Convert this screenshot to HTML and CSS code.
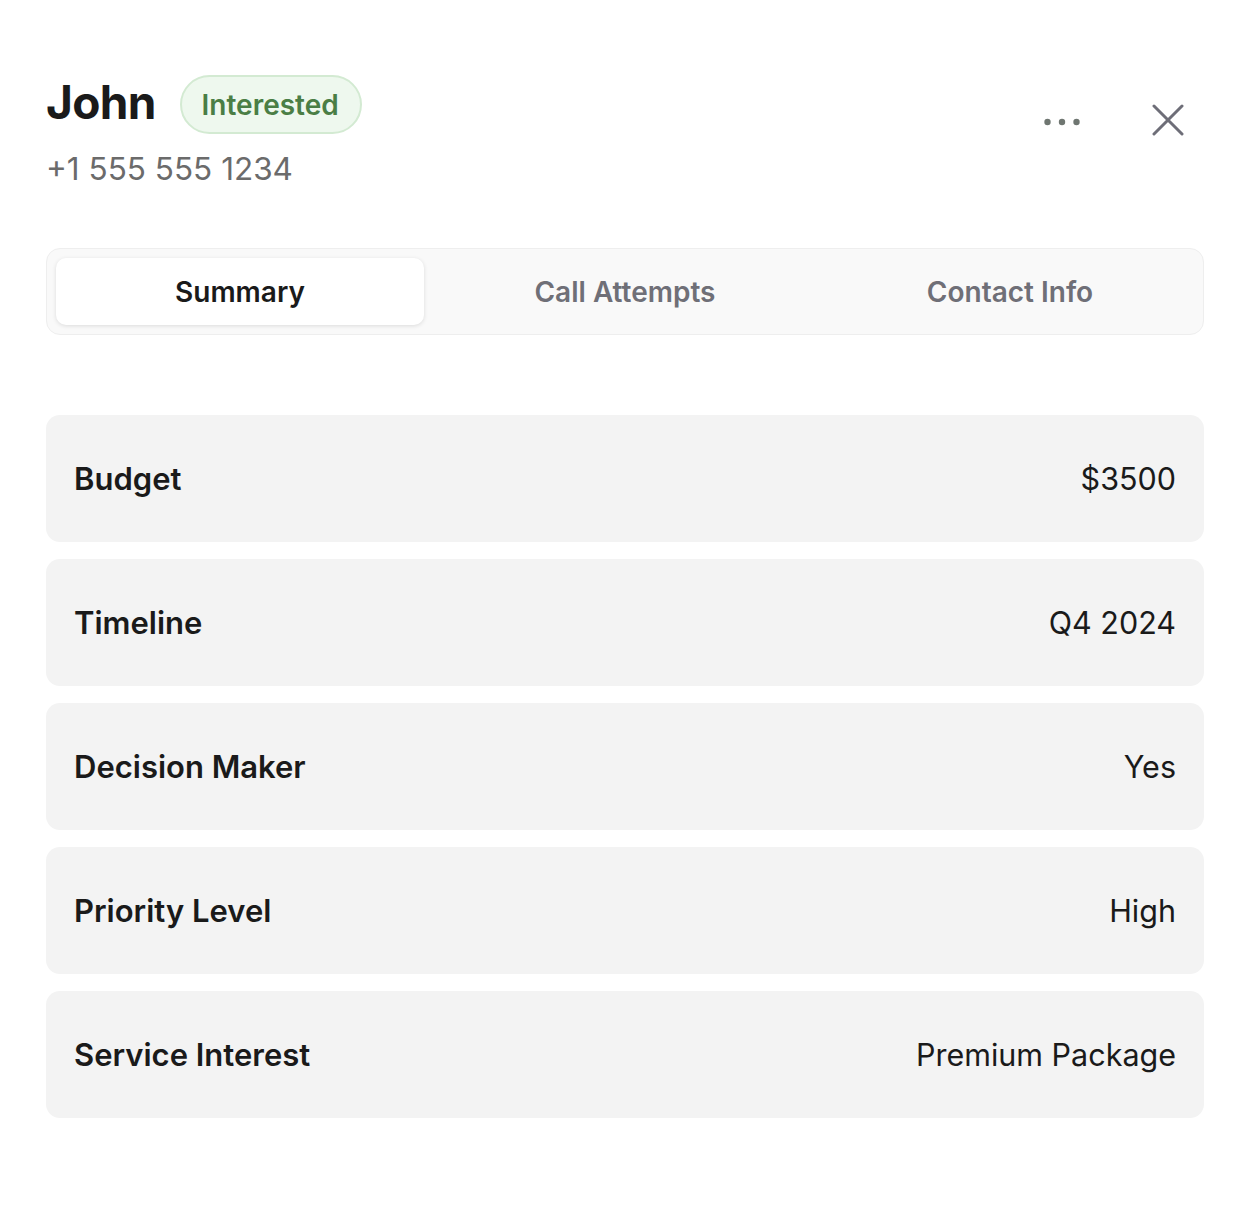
FILE: index.html
```html
<!DOCTYPE html>
<html lang="en">
<head>
<meta charset="utf-8">
<title>John</title>
<link rel="stylesheet" href="styles.css">
</head>
<body>
<div class="panel">
  <header class="header">
    <div class="who">
      <div class="name-row">
        <h1 class="name">John</h1>
        <span class="badge">Interested</span>
      </div>
      <div class="phone">+1 555 555 1234</div>
    </div>
    <div class="actions">
      <button class="icon-btn dots" aria-label="More">
        <svg width="36" height="10" viewBox="0 0 36 10"><circle cx="3.5" cy="5" r="3.2" fill="#6f7671"/><circle cx="18" cy="5" r="3.2" fill="#6f7671"/><circle cx="32.5" cy="5" r="3.2" fill="#6f7671"/></svg>
      </button>
      <button class="icon-btn close" aria-label="Close">
        <svg width="32" height="32" viewBox="0 0 32 32"><path d="M2 2L30 30M30 2L2 30" stroke="#6e6e78" stroke-width="3" stroke-linecap="round" fill="none"/></svg>
      </button>
    </div>
  </header>

  <nav class="tabs">
    <button class="tab active">Summary</button>
    <button class="tab">Call Attempts</button>
    <button class="tab">Contact Info</button>
  </nav>

  <section class="rows">
    <div class="row"><span class="label">Budget</span><span class="value">$3500</span></div>
    <div class="row"><span class="label">Timeline</span><span class="value">Q4 2024</span></div>
    <div class="row"><span class="label">Decision Maker</span><span class="value">Yes</span></div>
    <div class="row"><span class="label">Priority Level</span><span class="value">High</span></div>
    <div class="row"><span class="label">Service Interest</span><span class="value">Premium Package</span></div>
  </section>
</div>
</body>
</html>
```

FILE: styles.css
```css
* { box-sizing: border-box; }
html, body { margin: 0; background: #ffffff; }
body {
  font-family: Inter, "Noto Sans", sans-serif;
  color: #1a1a1a;
}
.panel {
  padding: 75px 48px 40px 46px;
}
.header {
  display: flex;
  justify-content: space-between;
  align-items: flex-start;
}
.name-row {
  display: flex;
  align-items: center;
  gap: 24px;
}
.name {
  margin: 0 0 6px 0;
  font-size: 46px;
  font-weight: 700;
  letter-spacing: -0.7px;
  line-height: 52px;
  color: #1a1a1a;
}
.badge {
  display: inline-flex;
  align-items: center;
  height: 59px;
  padding: 0 21px 0 20px;
  border-radius: 30px;
  background: #eef8ee;
  border: 2px solid #d3ead2;
  color: #4a7e45;
  font-size: 28px;
  font-weight: 600;
}
.phone {
  margin-top: 17px;
  font-size: 31.5px;
  color: #6b6b6b;
  line-height: 36px;
}
.actions {
  display: flex;
  align-items: flex-start;
  gap: 72px;
  margin-top: 29px;
  margin-right: 20px;
}
.icon-btn {
  border: 0;
  background: none;
  padding: 0;
  display: flex;
  cursor: pointer;
}
.dots { margin-top: 13px; }
.tabs {
  margin-top: 61px;
  display: grid;
  grid-template-columns: repeat(3, 1fr);
  gap: 17px;
  padding: 9px;
  background: #f9f9f9;
  border: 1px solid #eeeeee;
  border-radius: 14px;
}
.tab {
  height: 67px;
  border: 0;
  background: transparent;
  border-radius: 10px;
  font-family: inherit;
  font-size: 28px;
  font-weight: 600;
  color: #6f6f77;
}
.tab.active {
  background: #ffffff;
  color: #1a1a1a;
  box-shadow: 0 1px 4px rgba(0, 0, 0, 0.12);
}
.rows {
  margin-top: 80px;
  display: flex;
  flex-direction: column;
  gap: 17px;
}
.row {
  height: 127px;
  display: flex;
  justify-content: space-between;
  align-items: center;
  padding: 0 28px;
  background: #f3f3f3;
  border-radius: 14px;
}
.label { font-size: 31px; font-weight: 600; color: #1a1a1a; }
.value { font-size: 30.5px; font-weight: 400; color: #1a1a1a; }
```
